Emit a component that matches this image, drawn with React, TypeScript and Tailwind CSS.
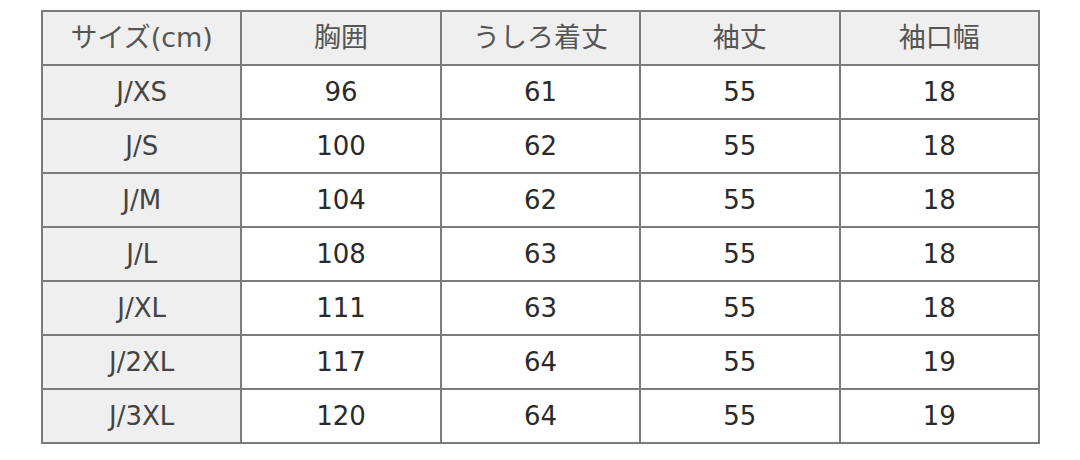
import React from 'react';

const head = ['サイズ(cm)', '胸囲', 'うしろ着丈', '袖丈', '袖口幅'];
const rows = [
  ['J/XS', '96', '61', '55', '18'],
  ['J/S', '100', '62', '55', '18'],
  ['J/M', '104', '62', '55', '18'],
  ['J/L', '108', '63', '55', '18'],
  ['J/XL', '111', '63', '55', '18'],
  ['J/2XL', '117', '64', '55', '19'],
  ['J/3XL', '120', '64', '55', '19'],
];

const App: React.FC = () => {
  return (
    <div className="w-[1080px] h-[460px] bg-white pt-[10px] pl-[41px]" style={{ fontFamily: '"DejaVu Sans", "Noto Sans CJK JP", sans-serif' }}>
      <table className="border-collapse w-[999px] table-fixed text-[26px]">
        <thead>
          <tr className="h-[54px]">
            {head.map((h) => (
              <th key={h} className="border-2 border-[#7b7b7b] bg-[#efefef] font-normal text-[#555] text-[27px] text-center align-middle">
                {h}
              </th>
            ))}
          </tr>
        </thead>
        <tbody>
          {rows.map((r) => (
            <tr key={r[0]} className="h-[54px]">
              {r.map((c, i) => (
                <td
                  key={i}
                  className={
                    'border-2 border-[#7b7b7b] text-center align-middle ' +
                    (i === 0 ? 'bg-[#efefef] text-[#444]' : 'bg-white text-[#2a2a2a]')
                  }
                >
                  {c}
                </td>
              ))}
            </tr>
          ))}
        </tbody>
      </table>
    </div>
  );
};

export default App;
